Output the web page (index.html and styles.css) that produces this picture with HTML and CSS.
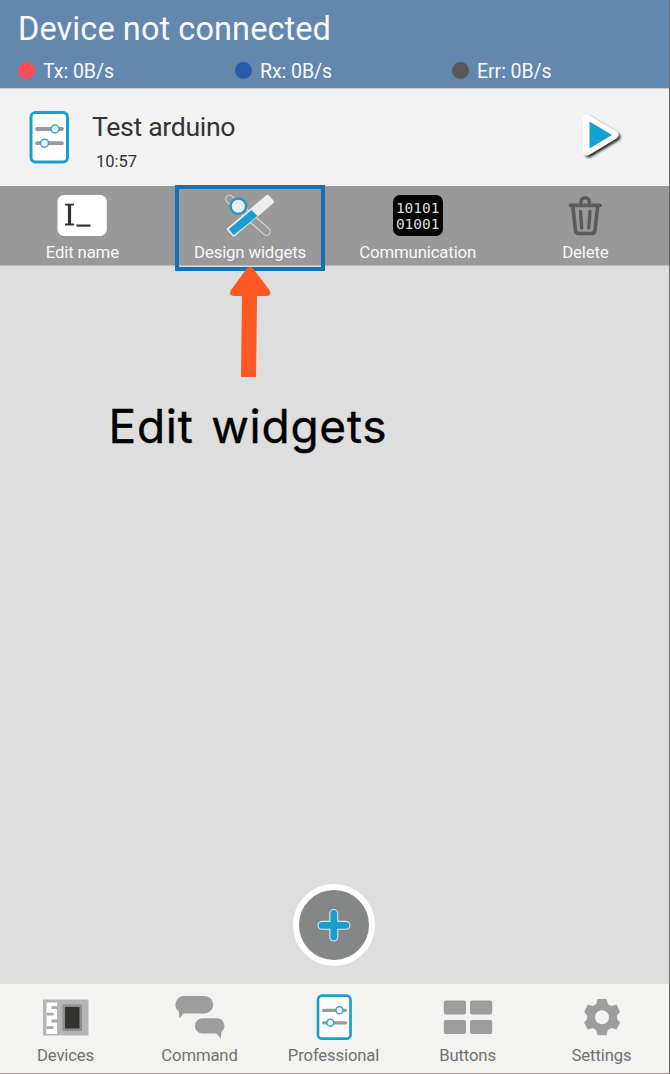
FILE: index.html
```html
<!DOCTYPE html>
<html lang="en">
<head>
<meta charset="utf-8">
<title>Test arduino</title>
<link rel="stylesheet" href="styles.css">
</head>
<body>
<div class="app">
  <header class="header">
    <h1 class="header-title"><span>Device not connected</span></h1>
    <div class="stats">
      <div class="stat"><span class="dot dot-tx"></span><span>Tx: 0B/s</span></div>
      <div class="stat"><span class="dot dot-rx"></span><span>Rx: 0B/s</span></div>
      <div class="stat"><span class="dot dot-err"></span><span>Err: 0B/s</span></div>
    </div>
  </header>

  <section class="project">
    <svg class="project-icon" width="40" height="54" viewBox="0 0 40 54">
      <rect x="2" y="2.500" width="36.500" height="49.500" rx="4.500" fill="#fff" stroke="#1b9fd0" stroke-width="3"/>
      <path d="M8 19h25M8 33.200h25" stroke="#999" stroke-width="3.800" stroke-linecap="round"/>
      <circle cx="26" cy="19" r="4" fill="#f2f2f2" stroke="#35a5d2" stroke-width="1.500"/>
      <circle cx="15.500" cy="33.200" r="4" fill="#f2f2f2" stroke="#35a5d2" stroke-width="1.500"/>
    </svg>
    <div class="project-text">
      <div class="project-name"><span>Test arduino</span></div>
      <div class="project-time"><span>10:57</span></div>
    </div>
    <svg class="play" width="46" height="48" viewBox="0 0 46 48">
      <path class="play-edge" d="M7 7.500v33l27.500-16.500z" fill="#fff" stroke="#fff" stroke-width="8" stroke-linejoin="round"/>
      <path d="M9.500 10.500v27l22.500-13.500z" fill="#169fd2"/>
    </svg>
  </section>

  <nav class="tools">
    <div class="tool">
      <svg width="60" height="46" viewBox="0 0 60 46">
        <rect x="5.500" y="3" width="49.300" height="41" rx="6.500" fill="#fff"/>
        <path d="M13 12.700h9M13 32.500h9" stroke="#333" stroke-width="1.800"/>
        <path d="M17.500 12v21" stroke="#333" stroke-width="3.200"/>
        <path d="M24.500 33.600h14" stroke="#333" stroke-width="2.200"/>
      </svg>
      <span>Edit name</span>
    </div>
    <div class="tool">
      <svg width="60" height="46" viewBox="0 0 60 46">
        <path d="M9.500 7L46.500 39.500" stroke="#ddd" stroke-width="8.500" stroke-linecap="round"/>
        <path d="M9.500 7L46.500 39.500" stroke="#999" stroke-width="6.500" stroke-linecap="round"/>
        <path d="M8 35.500L46 3.500Q47.500 2 49 3.500L53.500 8.500Q54.500 10 53 11.500L15 44Q13.500 45 12.500 44L7 38Q6.500 36.500 8 35.500z" fill="#ededed"/>
        <path d="M8.800 37.200L31.500 18 37.500 24 13.700 43.300z" fill="#189fd2"/>
        <circle cx="18.300" cy="14.200" r="7.700" fill="#eee" stroke="#1b9bcc" stroke-width="2.400"/>
      </svg>
      <span>Design widgets</span>
    </div>
    <div class="tool">
      <div class="binary"><span>10101</span><span>01001</span></div>
      <span>Communication</span>
    </div>
    <div class="tool">
      <svg width="60" height="46" viewBox="0 0 60 46" fill="none" stroke="#5b5b5b" stroke-linecap="round" stroke-linejoin="round">
        <path d="M15.500 13.300H45" stroke-width="3.700"/>
        <path d="M26 12V10a4.200 4.200 0 0 1 8.400 0V12" stroke-width="3.500"/>
        <path d="M18 16l2.500 22.500q.3 3 3.500 3h12.500q3 0 3.400-3L42.500 16" stroke-width="3.600"/>
        <path d="M25.500 19.500l1.200 16.500M35 19.500l-1.200 16.500" stroke-width="3.400"/>
      </svg>
      <span>Delete</span>
    </div>
    <div class="highlight"></div>
  </nav>

  <main class="content">
    <svg class="arrow" width="44" height="112" viewBox="0 0 44 112">
      <path d="M18.500 3Q22 -1.500 25.500 3L41 23.500Q44.500 29.500 39 30H29L28 111H13L14 30H6Q0 29.500 3 24z" fill="#fb5822"/>
    </svg>
    <div class="caption"><span>Edit widgets</span></div>
    <button class="add" aria-label="Add">
      <svg width="34" height="34" viewBox="0 0 34 34" fill="none" stroke-linecap="round">
        <path d="M16.800 5.500v23.500M5 17.300h24" stroke="#d8eaf0" stroke-width="9"/>
        <path d="M16.800 5.500v23.500M5 17.300h24" stroke="#189fd0" stroke-width="6.800"/>
      </svg>
    </button>
  </main>

  <nav class="tabs">
    <div class="tab">
      <svg width="60" height="50" viewBox="0 0 60 50">
        <rect x="7" y="7.500" width="45.500" height="36" fill="#b4b5b4"/>
        <rect x="10.500" y="10.500" width="10.500" height="31.500" fill="#fff"/>
        <path d="M15.500 15.700h6M10.500 22.200h7M15.500 29h6M10.500 35.700h7" stroke="#aaa" stroke-width="2.800"/>
        <rect x="26.500" y="12.500" width="19.500" height="26.500" fill="#8e8f8e"/>
        <rect x="29" y="15" width="14.500" height="21.500" fill="#343330"/>
      </svg>
      <span>Devices</span>
    </div>
    <div class="tab">
      <svg width="60" height="50" viewBox="0 0 60 50" fill="#9c9d9c">
        <path d="M14.500 4H34.500a8.700 8.700 0 0 1 0 17.400H13.500L9.500 26.500 8.800 19.500A8.700 8.700 0 0 1 14.500 4z"/>
        <path d="M32.500 26.300H46.500a7.600 7.600 0 0 1 5 13.500L50.800 46.500 46.500 41.500H32.500a7.600 7.600 0 0 1 0-15.200z"/>
      </svg>
      <span>Command</span>
    </div>
    <div class="tab">
      <svg width="60" height="50" viewBox="0 0 60 50">
        <rect x="14" y="3.700" width="32.500" height="43" rx="4" fill="#fff" stroke="#1b9fd0" stroke-width="2.700"/>
        <path d="M19.500 18.300h22M19.500 30.800h22" stroke="#999" stroke-width="3.200" stroke-linecap="round"/>
        <circle cx="35.500" cy="18.300" r="3.500" fill="#f2f2f2" stroke="#35a5d2" stroke-width="1.400"/>
        <circle cx="26.300" cy="30.800" r="3.500" fill="#f2f2f2" stroke="#35a5d2" stroke-width="1.400"/>
      </svg>
      <span>Professional</span>
    </div>
    <div class="tab">
      <svg width="60" height="50" viewBox="0 0 60 50" fill="#9c9d9c">
        <rect x="5.800" y="8.500" width="22.200" height="14" rx="2"/>
        <rect x="32" y="8.500" width="22.200" height="14" rx="2"/>
        <rect x="5.800" y="28" width="22.200" height="14" rx="2"/>
        <rect x="32" y="28" width="22.200" height="14" rx="2"/>
      </svg>
      <span>Buttons</span>
    </div>
    <div class="tab">
      <svg width="60" height="50" viewBox="0 0 60 50">
        <path fill="#9c9d9c" fill-rule="evenodd" d="M25.500 7h9l1.300 5 3.500 2 5.200-1.500L48 20l-3 3.500v3.500L48 30.500 44.500 37.500 39.500 36l-3.700 2-1.300 5.300h-9l-1.300-5.300-3.500-2-5 1.500-3.500-7 3-3.500v-3.500L12.200 20l3.500-7.300L21 14l3.200-2zM30 18.200a7 7 0 1 0 .01 0z"/>
      </svg>
      <span>Settings</span>
    </div>
  </nav>
</div>
</body>
</html>
```

FILE: styles.css
```css
* { box-sizing: border-box; }
body { margin: 0; font-family: Roboto, "Liberation Sans", sans-serif; }
svg { display: block; }
.app {
  width: 670px;
  height: 1074px;
  display: flex;
  flex-direction: column;
  background: #dedede;
  border-right: 1px solid #6b6b6b;
  overflow: hidden;
}
.header {
  height: 88px;
  flex: none;
  padding: 10px 0 0 18px;
  background: #6487ae;
  color: #f7f9fd;
}
.header-title { margin: 0; height: 48px; font-size: 32.500px; line-height: 39px; font-weight: 400; letter-spacing: .08px; white-space: nowrap; }
.stats { display: grid; grid-template-columns: repeat(3, 217px); }
.stat { display: flex; align-items: center; gap: 8px; height: 25px; font-size: 19.500px; line-height: 26px; letter-spacing: -.05px; white-space: nowrap; }
.stat span:last-child { padding-top: 2px; }
.dot { width: 17px; height: 17px; border-radius: 50%; }
.dot-tx { background: #fb4d57; }
.dot-rx { background: #2a5ba8; }
.dot-err { background: #575857; }
.project {
  height: 98px;
  flex: none;
  display: flex;
  padding-left: 29px;
  background: #f2f2f2;
  border-top: 1px solid #c9cbd2;
}
.project-icon { flex: none; margin-top: 21px; }
.project-text { flex: none; width: 511px; padding: 20px 0 0 23px; color: #333; }
.project-name { font-size: 26.700px; line-height: 36px; letter-spacing: -.35px; }
.project-time { padding-left: 4px; margin-top: 7px; font-size: 16.500px; line-height: 20px; }
.play { flex: none; margin-top: 22px; overflow: visible; }
.play-edge { filter: drop-shadow(2px 2px 1px #333); }
.tools {
  position: relative;
  height: 80px;
  flex: none;
  display: grid;
  grid-template-columns: repeat(4, 167.700px);
  padding-top: 6px;
  background: #999;
  border-bottom: 1px solid #b8b8b8;
}
.tool { display: flex; flex-direction: column; align-items: center; margin-left: -3px; color: #f8f8f8; font-size: 16.800px; line-height: 28px; letter-spacing: -.16px; white-space: nowrap; }
.binary {
  width: 50px;
  height: 41px;
  margin: 3px 0 2px;
  padding-top: 6px;
  border-radius: 7px;
  background: #050505;
  color: #ddd;
  font: 14.500px/15.500px "DejaVu Sans Mono", monospace;
  letter-spacing: 0;
  text-align: center;
}
.binary span { display: block; }
.highlight { position: absolute; left: 175px; top: -1px; width: 150px; height: 86px; border: 4px solid #1672b7; }
.content { position: relative; flex: 1; display: flex; flex-direction: column; align-items: flex-start; }
.arrow { position: relative; z-index: 1; margin-left: 227.500px; }
.caption { margin: 19px 0 0 108.500px; font-family: Inter, sans-serif; font-size: 46px; line-height: 58px; letter-spacing: .75px; word-spacing: 4px; -webkit-text-stroke: .4px #000; color: #000; white-space: nowrap; }
.add {
  width: 82px;
  height: 82px;
  margin: auto 0 18px 293px;
  padding: 0;
  display: grid;
  place-items: center;
  border: 6px solid #fff;
  border-radius: 50%;
  background: #858786;
}
.tabs {
  height: 90px;
  flex: none;
  display: grid;
  grid-template-columns: repeat(5, 134px);
  padding-top: 8px;
  background: #f3f3f2;
  border-bottom: 1px solid #a09896;
}
.tab { display: flex; flex-direction: column; align-items: center; margin-left: -3px; color: #717171; font-size: 16.700px; line-height: 28px; letter-spacing: -.14px; white-space: nowrap; }
```
